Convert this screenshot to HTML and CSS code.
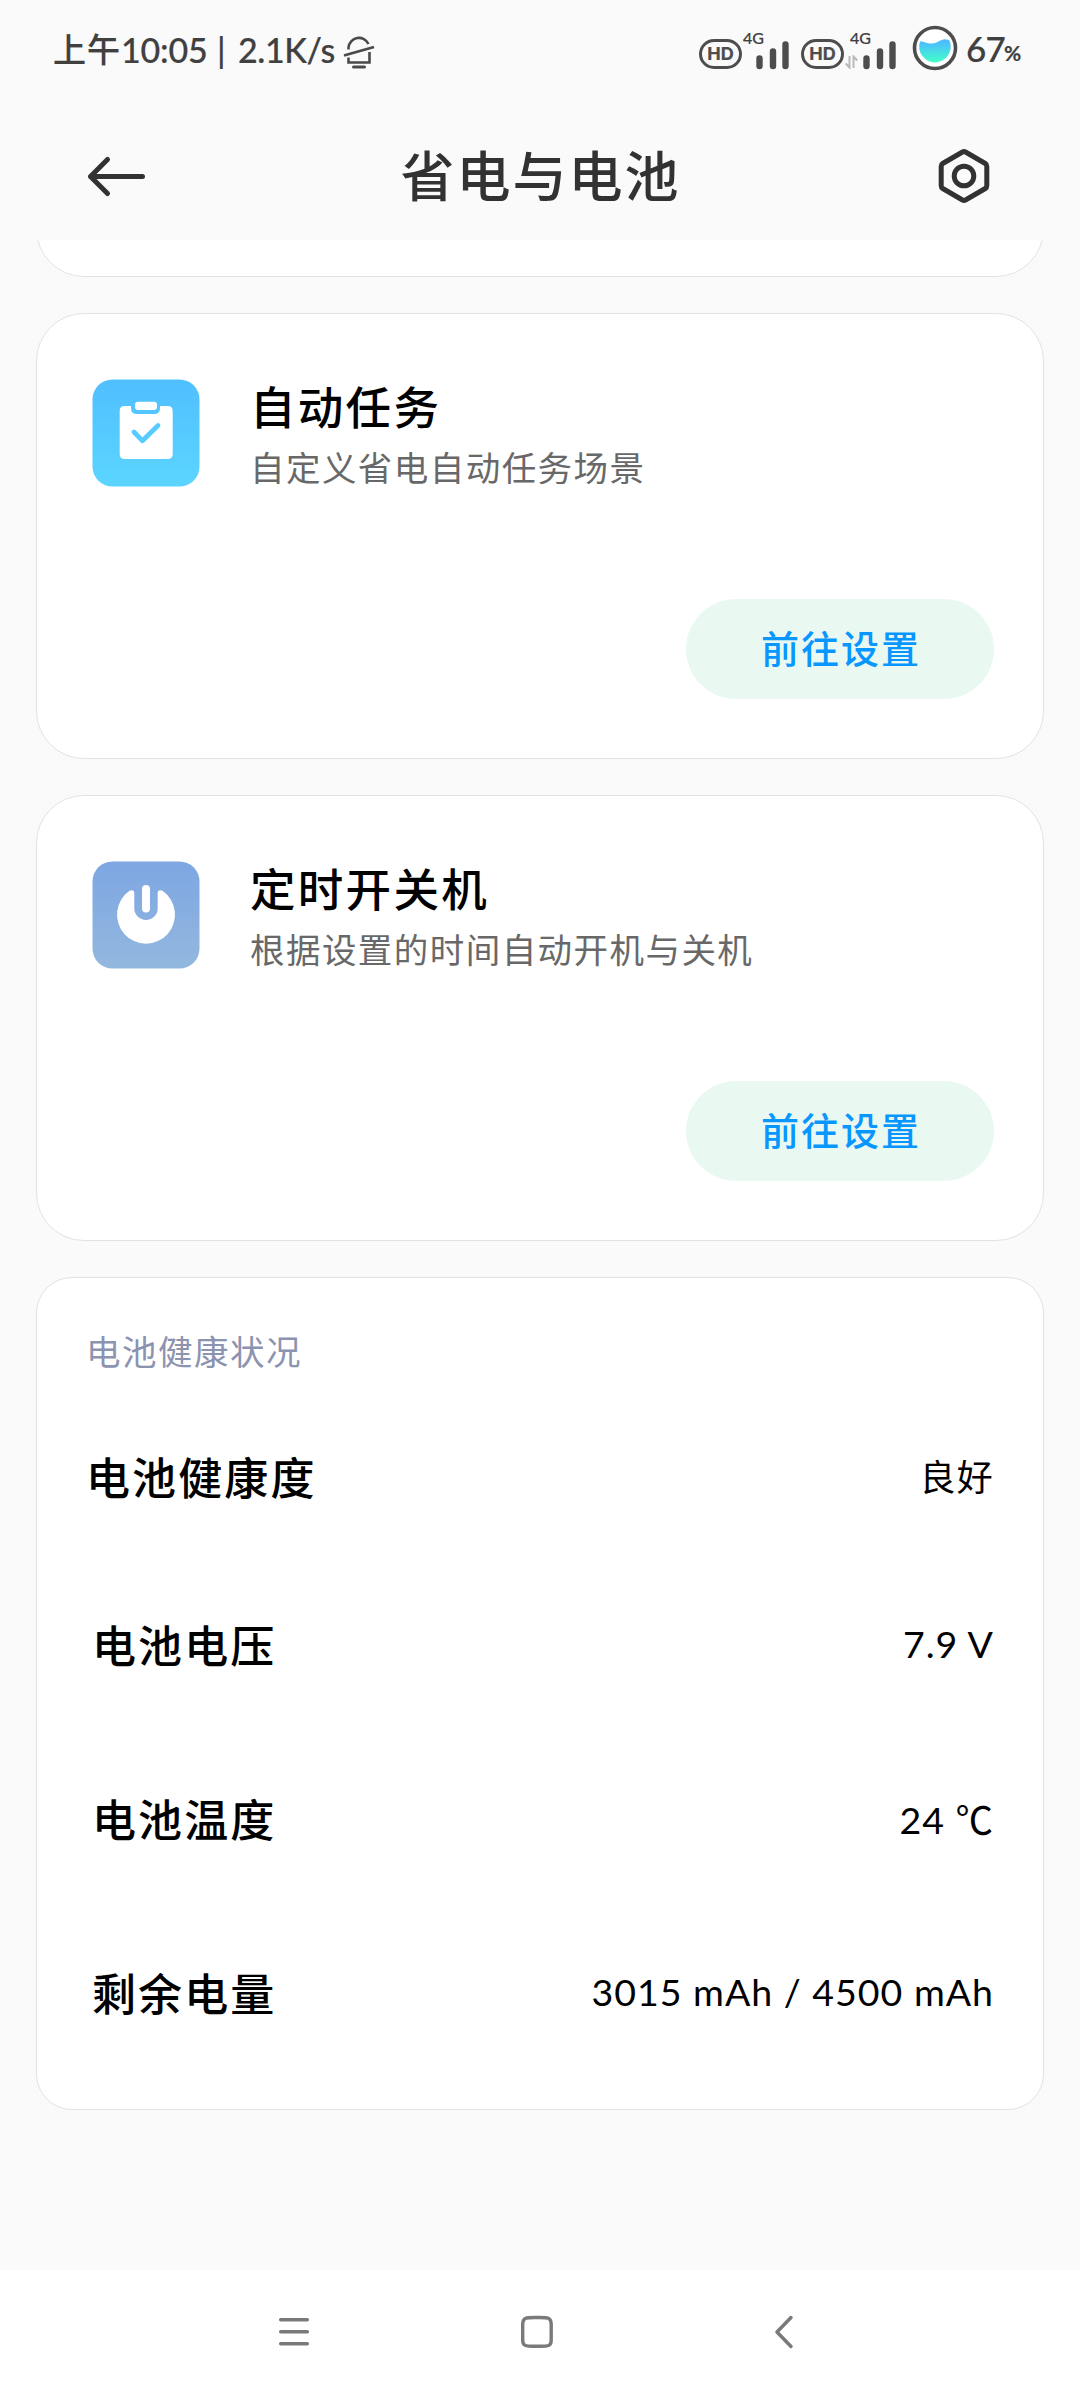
FILE: index.html
```html
<!DOCTYPE html>
<html lang="zh-CN">
<head>
<meta charset="utf-8">
<title>省电与电池</title>
<link rel="stylesheet" href="styles.css">
</head>
<body>
<div class="screen">
  <div class="status">
    <div class="status-left">
      <span class="ampm">上午</span><span class="clock">10:05</span><span class="divider">|</span><span class="speed">2.1K/s</span>
      <svg class="bell" width="32" height="36" viewBox="0 0 32 36" fill="none" stroke="#4a4a4a" stroke-width="2.6">
        <path d="M5.500 15.500V13.500A10.500 10.500 0 0 1 25.500 10"/>
        <path d="M1 21.500L31 13" stroke-width="2.800"/>
        <path d="M5.500 23.500V28.500H26.500V18"/>
        <path d="M10.500 33H21.500" stroke-width="3" stroke-linecap="round"/>
      </svg>
    </div>
    <div class="status-right">
      <span class="hd">HD</span>
      <span class="signal first">
        <span class="net">4G</span>
        <svg width="33" height="30" viewBox="0 0 33 30" stroke="#4d4d4d" stroke-width="6.400" stroke-linecap="round"><path d="M3.500 18.500V26M17 11.500V26M29.500 4.500V26"/></svg>
      </span>
      <span class="hd">HD</span>
      <span class="signal second">
        <span class="net">4G</span>
        <svg class="updown" width="13" height="14" viewBox="0 0 13 14" fill="none" stroke="#b9b9b9" stroke-width="2"><path d="M4.500 1V12.500L0.800 8.500M8.500 13V1.500L12.200 5.500"/></svg>
        <svg width="33" height="30" viewBox="0 0 33 30" stroke="#4d4d4d" stroke-width="6.400" stroke-linecap="round"><path d="M3.500 18.500V26M17 11.500V26M29.500 4.500V26"/></svg>
      </span>
      <svg class="battery" width="46" height="46" viewBox="0 0 46 46">
        <defs><linearGradient id="water" x1="0" y1="0" x2="0" y2="1"><stop offset="0.100" stop-color="#4cbcff"/><stop offset="1" stop-color="#42ffc8"/></linearGradient></defs>
        <circle cx="23" cy="23" r="20.500" fill="#fff" stroke="#4d4d4d" stroke-width="3.600"/>
        <path d="M8 16.500C12 16 14 18.500 20 18.500S28 14.300 33 14.300C35.500 14.300 37 15 37.800 16.200A15.800 15.800 0 1 1 8 16.500Z" fill="url(#water)"/>
      </svg>
      <span class="percent">67</span><span class="percent-sign">%</span>
    </div>
  </div>

  <header class="header">
    <svg width="60" height="44" viewBox="0 0 60 44" fill="none" stroke="#323232" stroke-width="5" stroke-linecap="round" stroke-linejoin="round"><path d="M56.500 22.500H4.500M21.500 5.500L4.500 22.500L21.500 39.500"/></svg>
    <h1>省电与电池</h1>
    <svg width="54" height="56" viewBox="0 0 54 56" fill="none" stroke="#323232" stroke-width="5" stroke-linejoin="round"><path d="M25.500 4Q27 3.200 28.500 4L48.300 15.500Q49.800 16.400 49.800 18.200V37.800Q49.800 39.600 48.300 40.500L28.500 52Q27 52.800 25.500 52L5.700 40.500Q4.200 39.600 4.200 37.800V18.200Q4.200 16.400 5.700 15.500Z"/><circle cx="27" cy="28" r="9.800"/></svg>
  </header>

  <main class="content">
    <section class="card card-tail"></section>

    <section class="card feature">
      <div class="feature-top">
        <svg class="app-icon" width="108" height="108" viewBox="0 0 108 108">
          <defs><linearGradient id="task" x1="0" y1="0" x2="0" y2="1"><stop offset="0" stop-color="#50bfff"/><stop offset="1" stop-color="#5bd5ff"/></linearGradient></defs>
          <rect x="0.500" y="0.500" width="107" height="107" rx="20" fill="url(#task)"/>
          <path d="M32.500 27H39V29Q39 35 45 35H62Q68 35 68 29V27H75.500Q80.700 27 80.700 32V75Q80.700 80 75.500 80H32.700Q27.700 80 27.700 75V32Q27.700 27 32.500 27Z" fill="#fff"/>
          <rect x="43" y="22.700" width="22" height="8.300" rx="3" fill="#fff"/>
          <path d="M42 53L50.500 61.800L66 46.500" fill="none" stroke="#58ccff" stroke-width="4.800" stroke-linecap="round" stroke-linejoin="round"/>
        </svg>
        <div class="feature-text">
          <h2>自动任务</h2>
          <p>自定义省电自动任务场景</p>
        </div>
      </div>
      <button class="go">前往设置</button>
    </section>

    <section class="card feature">
      <div class="feature-top">
        <svg class="app-icon" width="108" height="108" viewBox="0 0 108 108">
          <defs><linearGradient id="power" x1="0" y1="0" x2="0" y2="1"><stop offset="0" stop-color="#7ea6e2"/><stop offset="1" stop-color="#93b8df"/></linearGradient></defs>
          <rect x="0.500" y="0.500" width="107" height="107" rx="20" fill="url(#power)"/>
          <path d="M37.500 29.800C40.500 28.300 42.300 29.500 42.300 32V47.200A11.700 11.700 0 0 0 65.700 47.200V32C65.700 29.500 67.500 28.300 70.500 29.800A29 29 0 1 1 37.500 29.800Z" fill="#fff"/>
          <rect x="50" y="24" width="8" height="27.500" rx="4" fill="#fff"/>
        </svg>
        <div class="feature-text">
          <h2>定时开关机</h2>
          <p>根据设置的时间自动开机与关机</p>
        </div>
      </div>
      <button class="go">前往设置</button>
    </section>

    <section class="card health">
      <h3>电池健康状况</h3>
      <dl>
        <div class="row lead"><dt>电池健康度</dt><dd class="word">良好</dd></div>
        <div class="row"><dt>电池电压</dt><dd>7.9 V</dd></div>
        <div class="row"><dt>电池温度</dt><dd>24 ℃</dd></div>
        <div class="row"><dt>剩余电量</dt><dd>3015 mAh / 4500 mAh</dd></div>
      </dl>
    </section>
  </main>

  <nav class="nav">
    <svg width="34" height="34" viewBox="0 0 34 34" fill="none" stroke="#7a7a7a" stroke-width="3.500" stroke-linecap="round"><path d="M3.700 4.700H30.300M3.700 16.700H30.300M3.700 28.700H30.300"/></svg>
    <svg class="home" width="34" height="34" viewBox="0 0 34 34" fill="none" stroke="#7a7a7a" stroke-width="3.400"><path d="M17 2.500C27 2.500 31.200 2 31.200 9V25C31.200 32 27 31.200 17 31.200S2.700 32 2.700 25V9C2.700 2 7 2.500 17 2.500Z"/></svg>
    <svg width="20" height="34" viewBox="0 0 20 34" fill="none" stroke="#7a7a7a" stroke-width="3.500" stroke-linecap="round" stroke-linejoin="round"><path d="M17 2.500L3 17L17 31.500"/></svg>
  </nav>
</div>
</body>
</html>
```

FILE: styles.css
```css
* {
  box-sizing: border-box;
  margin: 0;
  padding: 0;
}

body {
  background: #fafafa;
  color: #000;
  font-family: "Noto Sans CJK SC", sans-serif;
}

svg {
  display: block;
  flex: none;
}

.screen {
  display: flex;
  flex-direction: column;
  width: 1080px;
  height: 2400px;
  overflow: hidden;
}

/* status bar */
.status {
  display: flex;
  justify-content: space-between;
  height: 100px;
  padding: 0 57px 0 53px;
  color: #404040;
  font-family: Lato, "Noto Sans CJK SC", sans-serif;
  font-size: 34px;
  font-weight: 500;
  line-height: 99px;
  white-space: nowrap;
  -webkit-text-stroke: 0.2px #404040;
}

.status-left,
.status-right {
  display: flex;
}

.ampm {
  width: 68px;
  font-size: 33px;
  letter-spacing: 1px;
}

.clock {
  width: 96px;
  letter-spacing: -0.2px;
}

.divider {
  width: 21px;
}

.speed {
  width: 105px;
  letter-spacing: -0.4px;
}

.bell {
  margin-top: 34px;
}

.hd {
  width: 43px;
  height: 30px;
  margin-top: 39px;
  border: 3px solid #4d4d4d;
  border-radius: 15px;
  color: #4d4d4d;
  font-family: Inter, sans-serif;
  font-size: 18px;
  font-weight: 700;
  line-height: 24px;
  text-align: center;
}

.signal {
  position: relative;
  display: flex;
  gap: 5px;
  padding-top: 40px;
}

.first {
  width: 59px;
  padding-left: 14px;
}

.second {
  width: 68px;
  padding-left: 1px;
}

.net {
  position: absolute;
  top: 29px;
  left: 1px;
  font-size: 16px;
  line-height: 18px;
}

.second .net {
  left: 6px;
}

.updown {
  margin-top: 15px;
}

.battery {
  margin: 25px 8px 0 0;
}

.percent {
  width: 38px;
  font-size: 35px;
  letter-spacing: -0.8px;
  line-height: 97px;
}

.percent-sign {
  width: 19px;
  font-size: 21px;
  font-weight: 700;
  line-height: 106px;
}

/* title bar */
.header {
  display: flex;
  align-items: center;
  justify-content: space-between;
  height: 140px;
  padding: 12px 89px 0 86px;
  color: #323232;
}

.header h1 {
  margin: -4px 2px 0 0;
  font-size: 54px;
  font-weight: 500;
  letter-spacing: 2px;
  line-height: 80px;
}

/* scrolling content */
.content {
  display: flex;
  flex: 1;
  flex-direction: column;
  gap: 36px;
  overflow: hidden;
  padding: 0 36px;
}

.card {
  flex: none;
  border: 1px solid #e2e2e2;
  border-radius: 48px;
  background: #fff;
}

.card-tail {
  height: 97px;
  margin-top: -60px;
}

.feature {
  display: flex;
  flex-direction: column;
  justify-content: space-between;
  height: 446px;
  padding: 65px 49px 59px 55px;
}

.feature-top {
  display: flex;
  gap: 50px;
}

.feature-text h2 {
  height: 62px;
  font-size: 45.5px;
  font-weight: 500;
  letter-spacing: 2.3px;
  line-height: 52px;
}

.feature-text p {
  color: #686868;
  font-size: 34.5px;
  letter-spacing: 1.45px;
  line-height: 50px;
}

.go {
  align-self: flex-end;
  width: 308px;
  height: 100px;
  border: 0;
  border-radius: 50px;
  background: #e9f9f2;
  color: #0896ff;
  font: 500 38px/96px "Noto Sans CJK SC", sans-serif;
  letter-spacing: 2px;
  padding: 0 0 4px 2px;
}

.health {
  height: 833px;
  padding: 47px 49px 0 49px;
  border-radius: 36px;
}

.health h3 {
  color: #8c93b0;
  font-size: 34.5px;
  font-weight: 400;
  letter-spacing: 1.5px;
  line-height: 50px;
}

.health dl {
  padding-top: 20px;
}

.row {
  display: flex;
  align-items: center;
  justify-content: space-between;
  height: 174px;
  padding-left: 6px;
}

.lead {
  height: 162px;
  padding-left: 0;
}

dt {
  font-size: 44px;
  font-weight: 500;
  letter-spacing: 2.1px;
}

dd {
  margin-top: -2px;
  font-family: Lato, "Noto Sans CJK SC", sans-serif;
  font-size: 37.5px;
  letter-spacing: 1px;
}

dd.word {
  font-size: 36px;
  letter-spacing: 1.2px;
}

/* navigation bar */
.nav {
  display: flex;
  align-items: center;
  height: 130px;
  padding: 0 0 6px 277px;
  background: #fff;
}

.nav .home {
  margin: 0 220px 0 209px;
}
```
